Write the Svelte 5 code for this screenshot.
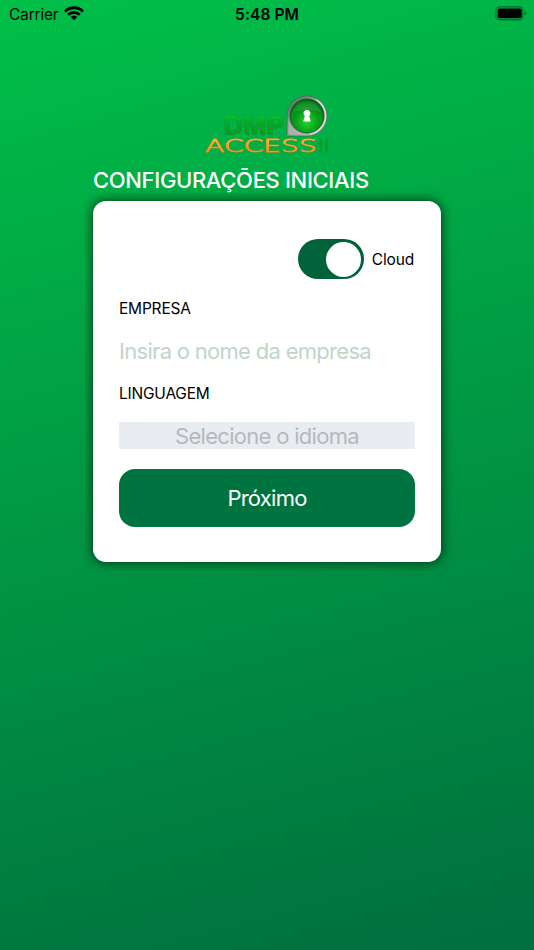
<script>
  let cloud = $state(true);
</script>

<main>
  <header>
    <div class="carrier">
      <span>Carrier</span>
      <svg width="20" height="15" viewBox="0 0 20 15" fill="none" stroke="#000" stroke-width="2.8">
        <path d="M1 5.4C6 .5 14 .5 19 5.4" />
        <path d="M4.2 8.8C7.5 5.7 12.5 5.7 15.8 8.8" />
        <path d="M10 14.2 6.8 11.1Q10 8.5 13.2 11.1Z" fill="#000" stroke="none" />
      </svg>
    </div>
    <time>5:48 PM</time>
    <svg class="battery" width="32" height="16" viewBox="0 0 32 16">
      <rect x=".9" y=".9" width="27" height="13" rx="3.6" fill="none" stroke="#006b2c" stroke-width="1.1" />
      <rect x="2.7" y="2.6" width="24" height="9.6" rx="1.7" />
      <path d="M29.6 5.2Q31.5 6 31.5 7.4T29.6 9.6Z" fill="#00712e" />
    </svg>
  </header>

  <section class="content">
    <svg class="logo" width="128" height="62" viewBox="203 93 128 62" role="img" aria-label="DMP Access II">
      <defs>
        <linearGradient id="metal" x1="0" y1="0" x2="1" y2="1">
          <stop offset="0" stop-color="#56635a" /><stop offset=".35" stop-color="#8c938e" />
          <stop offset=".6" stop-color="#a1a5a2" /><stop offset="1" stop-color="#d0d2d0" />
        </linearGradient>
        <radialGradient id="lens" cx=".5" cy=".68" r=".66">
          <stop offset="0" stop-color="#24d527" /><stop offset=".5" stop-color="#07a01c" />
          <stop offset="1" stop-color="#006815" />
        </radialGradient>
        <linearGradient id="letters" gradientUnits="userSpaceOnUse" x1="0" y1="115" x2="0" y2="135">
          <stop offset="0" stop-color="#05c432" /><stop offset=".35" stop-color="#08a828" /><stop offset="1" stop-color="#0a9a23" />
        </linearGradient>
        <linearGradient id="gold" gradientUnits="userSpaceOnUse" x1="0" y1="139" x2="0" y2="152">
          <stop offset="0" stop-color="#ffad35" /><stop offset="1" stop-color="#f29420" />
        </linearGradient>
      </defs>
      <text class="dmp" x="223.5" y="134" textLength="61" lengthAdjust="spacingAndGlyphs" fill="url(#letters)" stroke="url(#letters)">DMP</text>
      <path d="M287 136V116A20 20 0 1 1 307 136Z" fill="url(#metal)" stroke="#48604c" stroke-width=".6" />
      <path d="M288.5 134.4V117A18.5 18.5 0 0 0 305 134.4Z" fill="#bfc1bf" opacity=".55" />
      <path d="M316 99.5A18.5 18.5 0 0 1 310 134" fill="none" stroke="#dfe2df" stroke-width="1.3" />
      <circle cx="307" cy="116" r="17" fill="url(#lens)" stroke="#08581e" stroke-width=".8" />
      <circle cx="307" cy="116" r="14.4" fill="none" stroke="#179c28" stroke-width=".8" />
      <path d="M293 112A15 15 0 0 1 321 112Q307 107 293 112Z" fill="#65b86c" opacity=".28" />
      <path d="M307 109.8a3.6 3.6 0 0 1 2.2 6.4l1.6 5.3h-7.6l1.6-5.3a3.6 3.6 0 0 1 2.2-6.4Z" fill="#fff" />
      <text class="access" x="205.5" y="151.5" textLength="111.5" lengthAdjust="spacingAndGlyphs" fill="url(#gold)" stroke="url(#gold)">ACCESS</text>
      <text class="two" x="318" y="151.5" textLength="11" lengthAdjust="spacingAndGlyphs">II</text>
    </svg>
    <h1>CONFIGURAÇÕES INICIAIS</h1>
    <form class="card" onsubmit={(event) => event.preventDefault()}>
      <div class="mode">
        <button type="button" class="toggle" class:off={!cloud} role="switch" aria-checked={cloud} aria-label="Cloud" onclick={() => (cloud = !cloud)}>
          <span></span>
        </button>
        <span class="cloud">Cloud</span>
      </div>
      <label for="company">EMPRESA</label>
      <input id="company" class="company" placeholder="Insira o nome da empresa" />
      <div class="label">LINGUAGEM</div>
      <button type="button" class="language"><span>Selecione o idioma</span></button>
      <button type="submit" class="next"><span>Próximo</span></button>
    </form>
  </section>
</main>

<style>
  :global(body) { margin: 0; }
  main {
    width: 534px;
    height: 950px;
    overflow: hidden;
    background: linear-gradient(165deg, #00c048 0%, #006e3f 100%);
    font-family: Inter, "Liberation Sans", sans-serif;
    color: #000;
  }
  header {
    height: 28px;
    padding: 0 7px 0 9px;
    display: grid;
    grid-template-columns: 1fr auto 1fr;
    align-items: center;
    box-sizing: border-box;
  }
  .carrier { display: flex; align-items: center; gap: 6px; font-size: 15.5px; letter-spacing: -.2px; }
  .carrier svg { margin-top: -2px; }
  time { font-size: 15.5px; font-weight: 600; letter-spacing: .1px; margin-right: 2px; }
  .battery { justify-self: end; margin-top: -1px; }
  .content { width: 348px; margin: 65px auto 0; }
  .logo { display: block; margin: 0 0 0 110px; overflow: visible; }
  .dmp { font: 700 26.5px/1 "Liberation Sans", sans-serif; stroke-width: .9px; filter: drop-shadow(.4px .5px .2px rgba(0, 110, 30, .65)); }
  .access { font: 200 17.2px "DejaVu Sans", sans-serif; stroke-width: .9px; filter: drop-shadow(.6px .7px .3px #496b14); }
  .two { font: 400 17.2px "DejaVu Sans", sans-serif; fill: #07a02a; stroke: #07a02a; stroke-width: .3px; filter: drop-shadow(.5px .5px .2px rgba(0, 100, 25, .5)); }
  h1 { margin: 7px 0 0; height: 39px; line-height: 36px; font-size: 22px; font-weight: 500; letter-spacing: -.34px; color: #fff; white-space: nowrap; }
  .card {
    height: 361px;
    box-sizing: border-box;
    padding: 38px 26px 35px;
    background: #fff;
    border-radius: 13px;
    box-shadow: 0 0 11px 1px rgba(0, 30, 12, .78);
    display: flex;
    flex-direction: column;
  }
  button, input { font-family: inherit; border: 0; margin: 0; padding: 0; outline: 0; }
  .mode { display: flex; justify-content: flex-end; align-items: center; height: 41px; gap: 8px; padding-right: 1px; }
  .toggle { width: 66px; height: 40px; padding: 0 3px; border-radius: 20px; background: #006238; display: flex; justify-content: flex-end; align-items: center; }
  .toggle.off { justify-content: flex-start; background: #aaa; }
  .toggle span { width: 35px; height: 35px; background: #fff; border-radius: 50%; }
  .cloud { font-size: 15.5px; letter-spacing: -.15px; }
  label, .label { height: 20px; line-height: 20px; font-size: 15.5px; letter-spacing: -.2px; }
  label { margin-top: 20px; }
  .company { height: 30px; margin-top: 17px; font-size: 22px; letter-spacing: -.7px; }
  .company::placeholder { color: #c1d5c7; opacity: 1; }
  .label { margin-top: 18px; }
  .language { margin-top: 18px; height: 27px; flex-shrink: 0; background: #e9edf1; color: #b5b9bc; font-size: 22px; letter-spacing: -.7px; line-height: 29px; }
  .next { margin-top: 20px; height: 58px; flex-shrink: 0; background: #007440; border-radius: 16px; color: #fff; font-size: 22px; letter-spacing: -.75px; line-height: 58px; }
</style>
